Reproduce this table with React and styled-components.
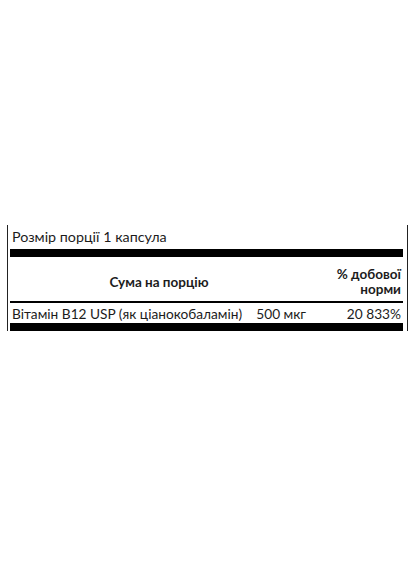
import React from 'react';
import styled, { createGlobalStyle } from 'styled-components';

const GlobalStyle = createGlobalStyle`
  html, body {
    margin: 0;
    padding: 0;
    background: #ffffff;
  }
  body {
    font-family: Lato, "Liberation Sans", Arial, sans-serif;
    color: #1c1c1c;
  }
`;

const Page = styled.div`
  width: 414px;
  height: 576px;
  padding-top: 225px;
  box-sizing: border-box;
`;

const Panel = styled.div`
  margin-left: 7px;
  width: 401px;
  box-sizing: border-box;
  border-left: 1px solid #222;
  border-right: 1px solid #222;
  padding: 0 4px 0 2px;
`;

const ServingRow = styled.div`
  height: 24px;
  display: flex;
  align-items: flex-end;
  padding: 0 0 4px 2px;
  box-sizing: border-box;
  font-size: 14.3px;
`;

const Bar = styled.div`
  height: ${(p) => p.size}px;
  background: #000;
`;

const Grid = styled.div`
  display: grid;
  grid-template-columns: 240px 58px 1fr;
`;

const HeaderMain = styled.div`
  grid-column: 1 / 3;
  height: 44px;
  display: flex;
  align-items: center;
  justify-content: center;
  padding-top: 6px;
  box-sizing: border-box;
  font-weight: 700;
  font-size: 13.5px;
`;

const HeaderSide = styled.div`
  height: 44px;
  display: flex;
  align-items: center;
  justify-content: flex-end;
  text-align: right;
  font-weight: 700;
  font-size: 13.5px;
  line-height: 15px;
  padding: 5px 2px 0 14px;
  box-sizing: border-box;
`;

const Cell = styled.div`
  height: 20px;
  display: flex;
  align-items: center;
  justify-content: ${(p) => p.align || 'flex-start'};
  font-size: 13.7px;
  padding: 1px ${(p) => (p.align === 'flex-end' ? '2px' : '0')} 0 2px;
  box-sizing: border-box;
  white-space: nowrap;
`;

export default function App() {
  return (
    <>
      <GlobalStyle />
      <Page>
        <Panel>
          <ServingRow>Розмір порції 1 капсула</ServingRow>
          <Bar size={8} />
          <Grid>
            <HeaderMain>Сума на порцію</HeaderMain>
            <HeaderSide>% добової норми</HeaderSide>
          </Grid>
          <Bar size={2} />
          <Grid>
            <Cell>Вітамін B12 USP (як ціанокобаламін)</Cell>
            <Cell align="flex-end">500 мкг</Cell>
            <Cell align="flex-end">20 833%</Cell>
          </Grid>
          <Bar size={8} />
        </Panel>
      </Page>
    </>
  );
}
